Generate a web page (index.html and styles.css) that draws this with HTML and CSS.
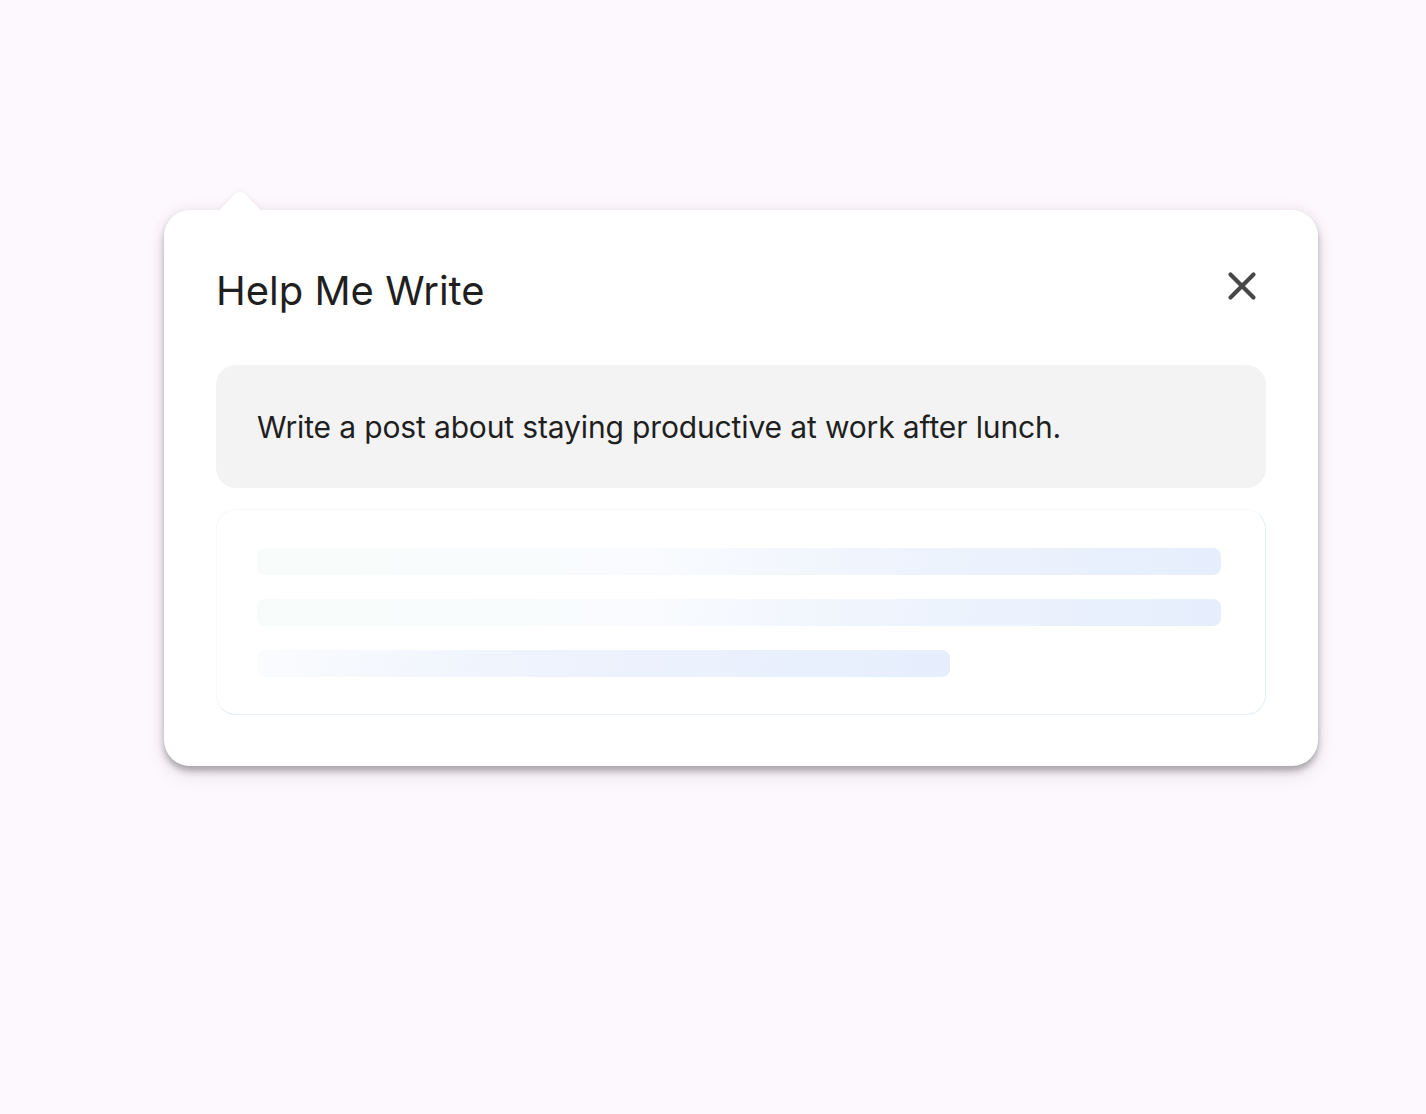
FILE: index.html
```html
<!DOCTYPE html>
<html>
<head>
<meta charset="utf-8">
<link rel="stylesheet" href="styles.css">
</head>
<body>
<div class="stage">
  <div class="card">
    <div class="arrow"></div>
    <div class="header">
      <h1 class="title">Help Me Write</h1>
      <button class="close" aria-label="Close">
        <svg width="30" height="30" viewBox="0 0 30 30"><path d="M3.5 3.5L26.5 26.5M26.5 3.5L3.5 26.5" stroke="#474747" stroke-width="4.2" stroke-linecap="round"/></svg>
      </button>
    </div>
    <div class="prompt">Write a post about staying productive at work after lunch.</div>
    <div class="loading">
      <div class="bar"></div>
      <div class="bar"></div>
      <div class="bar short"></div>
    </div>
  </div>
</div>
</body>
</html>
```
FILE: styles.css
```css
html, body {
  margin: 0;
  padding: 0;
  background: #fdf8fd;
  font-family: Inter, Roboto, "Liberation Sans", sans-serif;
}
.stage {
  padding: 210px 0 0 164px;
  min-height: 1114px;
  box-sizing: border-box;
}
.card {
  position: relative;
  width: 1154px;
  height: 556px;
  box-sizing: border-box;
  background: #fff;
  border-radius: 26px;
  padding: 0 52px;
  box-shadow: 0 5px 6px rgba(0,0,0,0.26), 0 10px 20px rgba(0,0,0,0.08), 0 0 14px rgba(120,100,140,0.12);
}
.arrow {
  position: absolute;
  left: 60px;
  top: -14px;
  width: 32px;
  height: 32px;
  background: #fff;
  transform: rotate(45deg);
  border-radius: 5px;
  box-shadow: -2px -2px 4px rgba(120,100,140,0.05);
}
.header {
  position: relative;
  display: flex;
  justify-content: space-between;
  align-items: center;
  height: 155px;
}
.title {
  margin: 0;
  font-weight: 400;
  font-size: 40px;
  color: #1f1f1f;
  letter-spacing: 0;
  padding-top: 6px;
}
.close {
  border: 0;
  background: none;
  padding: 0;
  margin-right: 9px;
  margin-top: -4px;
  width: 30px;
  height: 30px;
  cursor: pointer;
}
.close svg {
  display: block;
}
.prompt {
  height: 123px;
  box-sizing: border-box;
  background: #f3f3f3;
  border-radius: 20px;
  padding: 0 41px;
  display: flex;
  align-items: center;
  font-size: 30px;
  letter-spacing: -0.14px;
  color: #1f1f1f;
}
.loading {
  margin-top: 21px;
  height: 206px;
  box-sizing: border-box;
  border: 1.5px solid #e6edf8;
  border-top-color: #f5f8fd;
  border-left-color: #f5f8fd;
  border-radius: 20px;
  padding: 38px 44px 0 40px;
  display: flex;
  flex-direction: column;
  gap: 24px;
}
.bar {
  height: 27px;
  border-radius: 8px;
  background: linear-gradient(100deg, rgba(240,250,245,0.5) 0%, rgba(245,248,253,0.6) 40%, #edf3fd 70%, #e6eefd 100%);
}
.bar.short {
  width: 693px;
  background: linear-gradient(100deg, rgba(245,248,252,0.5) 0%, #eef3fd 40%, #e6eefd 100%);
}
```
